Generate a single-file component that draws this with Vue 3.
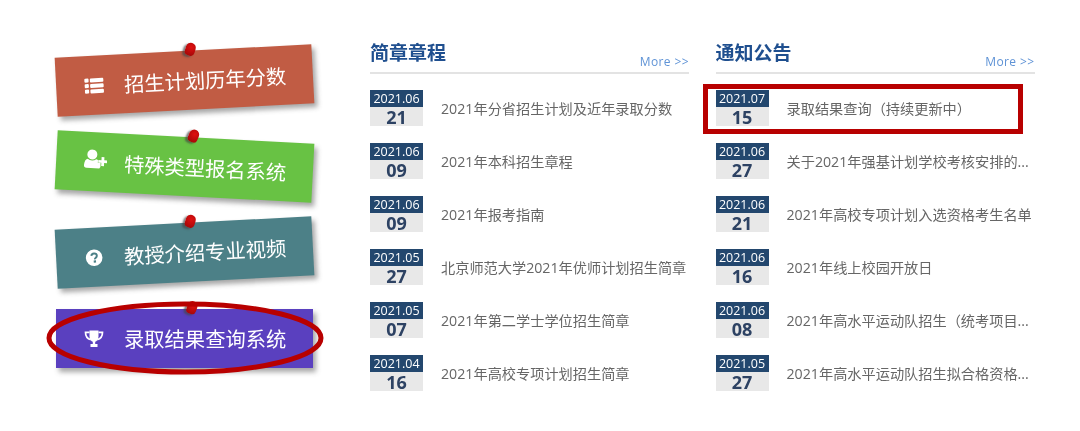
<script setup>
const notes = [
  { text: '招生计划历年分数', cls: 'n1', icon: 'list' },
  { text: '特殊类型报名系统', cls: 'n2', icon: 'user' },
  { text: '教授介绍专业视频', cls: 'n3', icon: 'help' },
  { text: '录取结果查询系统', cls: 'n4', icon: 'trophy' }
]
const cols = [
  {
    title: '简章章程',
    items: [
      ['2021.06', '21', '2021年分省招生计划及近年录取分数'],
      ['2021.06', '09', '2021年本科招生章程'],
      ['2021.06', '09', '2021年报考指南'],
      ['2021.05', '27', '北京师范大学2021年优师计划招生简章'],
      ['2021.05', '07', '2021年第二学士学位招生简章'],
      ['2021.04', '16', '2021年高校专项计划招生简章']
    ]
  },
  {
    title: '通知公告',
    items: [
      ['2021.07', '15', '录取结果查询（持续更新中）'],
      ['2021.06', '27', '关于2021年强基计划学校考核安排的...'],
      ['2021.06', '21', '2021年高校专项计划入选资格考生名单'],
      ['2021.06', '16', '2021年线上校园开放日'],
      ['2021.06', '08', '2021年高水平运动队招生（统考项目...'],
      ['2021.05', '27', '2021年高水平运动队招生拟合格资格...']
    ]
  }
]
</script>

<template>
  <div class="page">
    <div class="notes">
      <div v-for="n in notes" :key="n.cls" class="note" :class="n.cls">
        <svg v-if="n.icon === 'list'" class="ico" viewBox="0 0 20 20">
          <g fill="#fff">
            <rect x="0.500" y="2.500" width="4.200" height="4" rx="1" />
            <rect x="0.500" y="8" width="4.200" height="4" rx="1" />
            <rect x="0.500" y="13.500" width="4.200" height="4" rx="1" />
            <rect x="6" y="2.500" width="13.500" height="4" rx="1" />
            <rect x="6" y="8" width="13.500" height="4" rx="1" />
            <rect x="6" y="13.500" width="13.500" height="4" rx="1" />
          </g>
        </svg>
        <svg v-else-if="n.icon === 'user'" class="ico ico-user" viewBox="0 0 22 20">
          <g fill="#fff">
            <circle cx="7.500" cy="5" r="4.800" />
            <path d="M0 16c0-4 1.500-6.300 3.500-6.600 1.200.9 2.500 1.400 4 1.400s2.800-.5 4-1.400c.6.100 1.200.4 1.700.8v2.600h2.600v3.800l-1 1.400H2.500C1 18 0 17.200 0 16z" />
            <path d="M16.500 7h2.700v3H22v2.600h-2.800v3h-2.700v-3h-3V10h3z" />
          </g>
        </svg>
        <svg v-else-if="n.icon === 'help'" class="ico" viewBox="0 0 20 20">
          <circle cx="10" cy="10" r="8.300" fill="#fff" />
          <path d="M7.300 8c.2-1.500 1.300-2.200 2.700-2.200 1.600 0 2.800.9 2.800 2.300 0 2-2.200 1.900-2.200 3.600" fill="none" stroke="#4c8087" stroke-width="1.900" />
          <rect x="9.400" y="12.700" width="2.300" height="2.200" fill="#4c8087" />
        </svg>
        <svg v-else class="ico" viewBox="0 0 20 20">
          <path d="M5.500 1.500h9v6c0 3-1.800 4.800-3.300 5.300v2.200H13.500v3H6.500v-3h2.300v-2.200C7.300 12.300 5.500 10.500 5.500 7.500z" fill="#fff" />
          <path d="M5.500 3.300H1.500c0 4 1.500 6.500 5.300 7.300M14.500 3.300H18.500c0 4-1.500 6.500-5.300 7.300" fill="none" stroke="#fff" stroke-width="1.700" />
        </svg>
        <span class="note-text">{{ n.text }}</span>
        <span class="pin"></span>
      </div>
      <svg class="ring" viewBox="0 0 284 80">
        <ellipse cx="142" cy="40" rx="136" ry="34" fill="none" stroke="#b80000" stroke-width="5" />
      </svg>
    </div>

    <section v-for="c in cols" :key="c.title" class="col">
      <header class="col-head">
        <h2>{{ c.title }}</h2>
        <span class="more">More &gt;&gt;</span>
      </header>
      <ul>
        <li v-for="(it, i) in c.items" :key="i" class="row">
          <div class="date">
            <div class="ym">{{ it[0] }}</div>
            <div class="d">{{ it[1] }}</div>
          </div>
          <span class="txt">{{ it[2] }}</span>
        </li>
      </ul>
    </section>
    <div class="mark"></div>
  </div>
</template>

<style>
html, body { margin: 0; background: #fff; }
</style>

<style scoped>
.page {
  position: relative;
  width: 1080px;
  height: 431px;
  overflow: hidden;
  background: #fff;
  display: flex;
  align-items: flex-start;
  font-family: "Open Sans", "Noto Sans CJK SC", sans-serif;
  filter: blur(0.35px);
}
.notes {
  position: relative;
  width: 257px;
  margin: 51px 57px 0 56px;
  display: flex;
  flex-direction: column;
  gap: 27px;
}
.note {
  position: relative;
  box-sizing: border-box;
  height: 59px;
  display: flex;
  align-items: center;
  padding-left: 28px;
  color: #fff;
  box-shadow: 3px 4px 5px rgba(60, 60, 60, 0.45);
}
.n1 { background: #c15c44; transform: rotate(-3deg); }
.n2 { background: #68c244; transform: rotate(3deg); }
.n3 { background: #4c8087; transform: rotate(-3deg); }
.n4 { background: #5a40bf; }
.ico { width: 20px; height: 20px; flex: none; }
.ico-user { width: 23px; height: 21px; margin: -4px -3px 0 0; }
.note-text {
  margin-left: 20px;
  font-size: 20.300px;
  line-height: 24px;
  white-space: nowrap;
}
.pin {
  position: absolute;
  left: 131px;
  top: -8px;
  width: 10px;
  height: 13px;
  border-radius: 5px 5px 4px 4px;
  background: radial-gradient(circle at 55% 35%, #e01010, #a80808 80%);
  transform: rotate(20deg);
  box-shadow: -2px 2px 2px rgba(70, 70, 70, 0.7);
}
.ring {
  position: absolute;
  left: -13px;
  top: 247px;
  width: 284px;
  height: 80px;
}
.col {
  width: 319px;
  margin-right: 26.500px;
}
.col-head {
  height: 33px;
  margin-top: 39px;
  border-bottom: 2px solid #e3e3e3;
  display: flex;
  justify-content: space-between;
  align-items: flex-start;
}
h2 {
  margin: 1px 0 0;
  font-size: 19px;
  line-height: 26px;
  font-weight: 700;
  color: #1f4f8f;
}
.more {
  margin-top: 14px;
  font-size: 12px;
  line-height: 17px;
  letter-spacing: 0.4px;
  color: #5f93d6;
}
ul {
  list-style: none;
  margin: 16px 0 0;
  padding: 0;
}
.row {
  height: 53px;
  display: flex;
  align-items: flex-start;
}
.date {
  width: 53px;
  flex: none;
  text-align: center;
}
.ym {
  height: 17px;
  line-height: 17px;
  font-size: 12.500px;
  color: #fff;
  background: #23476e;
}
.d {
  height: 19px;
  line-height: 20px;
  font-size: 18px;
  font-weight: 700;
  color: #2d4263;
  background: #e8e8e8;
}
.txt {
  margin-left: 18px;
  margin-top: 9px;
  font-size: 14.200px;
  line-height: 20px;
  color: #666;
  white-space: nowrap;
}
.mark {
  position: absolute;
  left: 703px;
  top: 84px;
  width: 320px;
  height: 50px;
  box-sizing: border-box;
  border: 5px solid #b80000;
}
</style>
